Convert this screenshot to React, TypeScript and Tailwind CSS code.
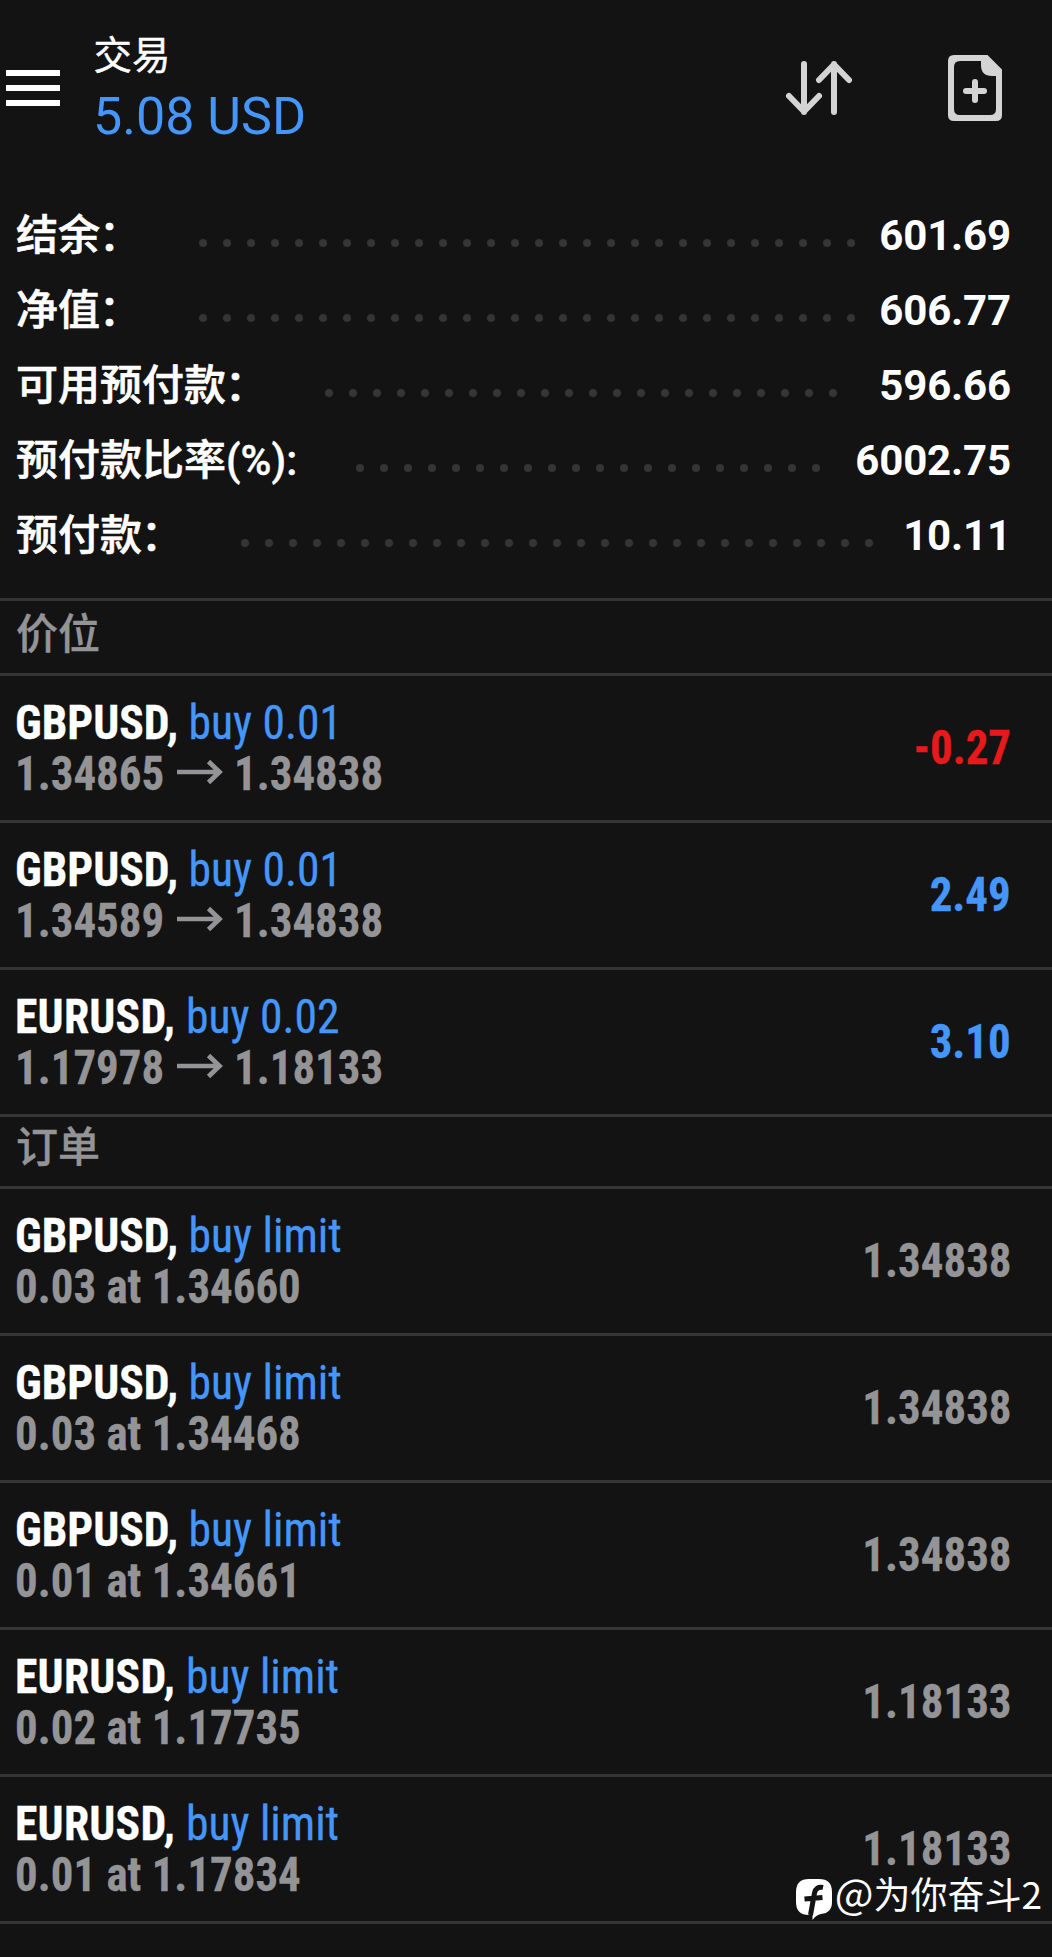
import React from 'react';

type Summary = { label: string; suffix: string; value: string; dots: number; start: string };
type Entry = { symbol: string; action: string; from: string; to?: string; value: string; tone: string };

const summary: Summary[] = [
  { label: '结余', suffix: '：', value: '601.69', dots: 28, start: 'w-[183px]' },
  { label: '净值', suffix: '：', value: '606.77', dots: 28, start: 'w-[183px]' },
  { label: '可用预付款', suffix: '：', value: '596.66', dots: 22, start: 'w-[309px]' },
  { label: '预付款比率', suffix: '(%):', value: '6002.75', dots: 20, start: 'w-[340px]' },
  { label: '预付款', suffix: '：', value: '10.11', dots: 27, start: 'w-[225px]' },
];

const positions: Entry[] = [
  { symbol: 'GBPUSD', action: 'buy 0.01', from: '1.34865', to: '1.34838', value: '-0.27', tone: 'text-[#e8191b]' },
  { symbol: 'GBPUSD', action: 'buy 0.01', from: '1.34589', to: '1.34838', value: '2.49', tone: 'text-[#4596fb]' },
  { symbol: 'EURUSD', action: 'buy 0.02', from: '1.17978', to: '1.18133', value: '3.10', tone: 'text-[#4596fb]' },
];

const orders: Entry[] = [
  { symbol: 'GBPUSD', action: 'buy limit', from: '0.03 at 1.34660', value: '1.34838', tone: 'text-[#949497]' },
  { symbol: 'GBPUSD', action: 'buy limit', from: '0.03 at 1.34468', value: '1.34838', tone: 'text-[#949497]' },
  { symbol: 'GBPUSD', action: 'buy limit', from: '0.01 at 1.34661', value: '1.34838', tone: 'text-[#949497]' },
  { symbol: 'EURUSD', action: 'buy limit', from: '0.02 at 1.17735', value: '1.18133', tone: 'text-[#949497]' },
  { symbol: 'EURUSD', action: 'buy limit', from: '0.01 at 1.17834', value: '1.18133', tone: 'text-[#949497]' },
];

function Header() {
  return (
    <header className="flex h-[198px] items-start">
      <button aria-label="menu" className="ml-[6px] mt-[70px] flex w-[54px] flex-col gap-[9px]">
        <span className="h-[6px] w-full bg-white" />
        <span className="h-[6px] w-full bg-white" />
        <span className="h-[6px] w-full bg-white" />
      </button>
      <div className="ml-[33px] mt-[33px] grow">
        <div className="pl-[0.5px] text-[38.5px] leading-[46px] [-webkit-text-stroke:0.4px_white]">交易</div>
        <div className="mt-[8px] text-[52px] leading-[60px] text-[#4596fb]">5.08 USD</div>
      </div>
      <svg className="mt-[60px] h-[56px] w-[68px]" viewBox="785 60 68 56" fill="none" stroke="#d4d4d4" strokeWidth="6" strokeLinecap="round" strokeLinejoin="round">
        <path d="M804 64V112M789 96L804 111.500L819 96M834 112V64M819 80L834 64.500L849 80" />
      </svg>
      <svg className="ml-[95px] mr-[50px] mt-[55px] h-[66px] w-[54px]" viewBox="948 55 54 66" fill="#d4d4d4">
        <path fillRule="evenodd" d="M954 55H987.500L1002 69.500V115Q1002 121 996 121H954Q948 121 948 115V61Q948 55 954 55ZM960 61Q954 61 954 67V109Q954 115 960 115H990Q996 115 996 109V76H992Q981 76 981 65V61Z" />
        <path d="M975 82V100M966 91H984" stroke="#d4d4d4" strokeWidth="6" strokeLinecap="round" />
      </svg>
    </header>
  );
}

function SummaryRow({ label, suffix, value, dots, start }: Summary) {
  return (
    <div className="flex h-[75px] items-center pl-4 pr-[41px] text-[42px] font-medium leading-[75px]">
      <span className={`${start} shrink-0 whitespace-nowrap`}>
        <span className="[-webkit-text-stroke:0.6px_white]">{label}</span>
        <span className={suffix === '：' ? '-ml-px [-webkit-text-stroke:0.6px_white]' : '[-webkit-text-stroke:0.4px_white]'}>{suffix}</span>
      </span>
      <span className="mt-[14px] flex gap-4">
        {Array.from({ length: dots }, (_, i) => (
          <span key={i} className="size-2 rounded-full bg-[#353535]" />
        ))}
      </span>
      <span className="ml-auto font-bold tracking-[-0.15px]">{value}</span>
    </div>
  );
}

function SectionTitle({ children, size }: { children: string; size: string }) {
  return (
    <div className={`${size} border-b-[3px] border-[#353535] pl-4 text-[42px] font-medium text-[#949497] [-webkit-text-stroke:0.4px]`}>
      {children}
    </div>
  );
}

function Row({ symbol, action, from, to, value, tone }: Entry) {
  return (
    <div className="flex h-[147px] items-center justify-between border-b-[3px] border-[#353535] pl-[15px] pr-[41px] text-[48px] font-bold leading-[51px] [-webkit-text-stroke:0.3px] [font-stretch:75%]">
      <div>
        <div className="origin-left scale-x-[0.95] whitespace-nowrap">
          <span className={symbol === 'EURUSD' ? 'tracking-[0.25px]' : ''}>{symbol}, </span>
          <span className="font-normal text-[#4596fb]">{action}</span>
        </div>
        {to ? (
          <div className="flex items-center text-[#949497]">
            <span className="w-[162px] origin-left scale-x-[0.935]">{from}</span>
            <svg className="-mt-[4px] mr-[11px] h-[26px] w-[46px]" viewBox="0 0 46 26" fill="none" stroke="currentColor" strokeWidth="4.7">
              <path d="M0 13H43M31.500 2.500L42.500 13L31.500 23.500" />
            </svg>
            <span className="origin-left scale-x-[0.935]">{to}</span>
          </div>
        ) : (
          <div className="origin-left scale-x-[0.935] whitespace-nowrap text-[#949497]">{from}</div>
        )}
      </div>
      <span className={`${tone} -mt-[2px] origin-right scale-x-[0.935]`}>{value}</span>
    </div>
  );
}

function Watermark() {
  return (
    <div className="absolute right-[10px] top-[1865px] flex items-center text-[37px] leading-[50px] text-white [font-family:'Noto_Sans_CJK_SC',sans-serif]">
      <svg className="mt-[14px] h-[41px] w-[37px]" viewBox="0 0 37 41">
        <path fill="#fff" d="M13 0H23Q36 0 36 13V23Q36 34 25 35Q20 36 16.500 41V36H13Q0 36 0 23V13Q0 0 13 0Z" />
        <path d="M27 8.500Q20 7 18.500 14L14.500 36M8.500 20L26.500 18.500" fill="none" stroke="#131313" strokeWidth="5" />
      </svg>
      <span className="ml-[2px]"><span className="text-[41px] leading-none">@</span>为你奋斗2</span>
    </div>
  );
}

export default function App() {
  return (
    <main className="relative h-[1957px] w-[1052px] overflow-hidden bg-[#131313] text-white [font-family:Roboto,'Noto_Sans_CJK_SC',sans-serif]">
      <Header />
      <section className="h-[403px] border-b-[3px] border-[#353535]">
        {summary.map((s) => <SummaryRow key={s.label} {...s} />)}
      </section>
      <SectionTitle size="h-[75px] leading-[67px]">价位</SectionTitle>
      {positions.map((p, i) => <Row key={i} {...p} />)}
      <SectionTitle size="h-[72px] leading-[61px]">订单</SectionTitle>
      {orders.map((o, i) => <Row key={i} {...o} />)}
      <Watermark />
    </main>
  );
}
